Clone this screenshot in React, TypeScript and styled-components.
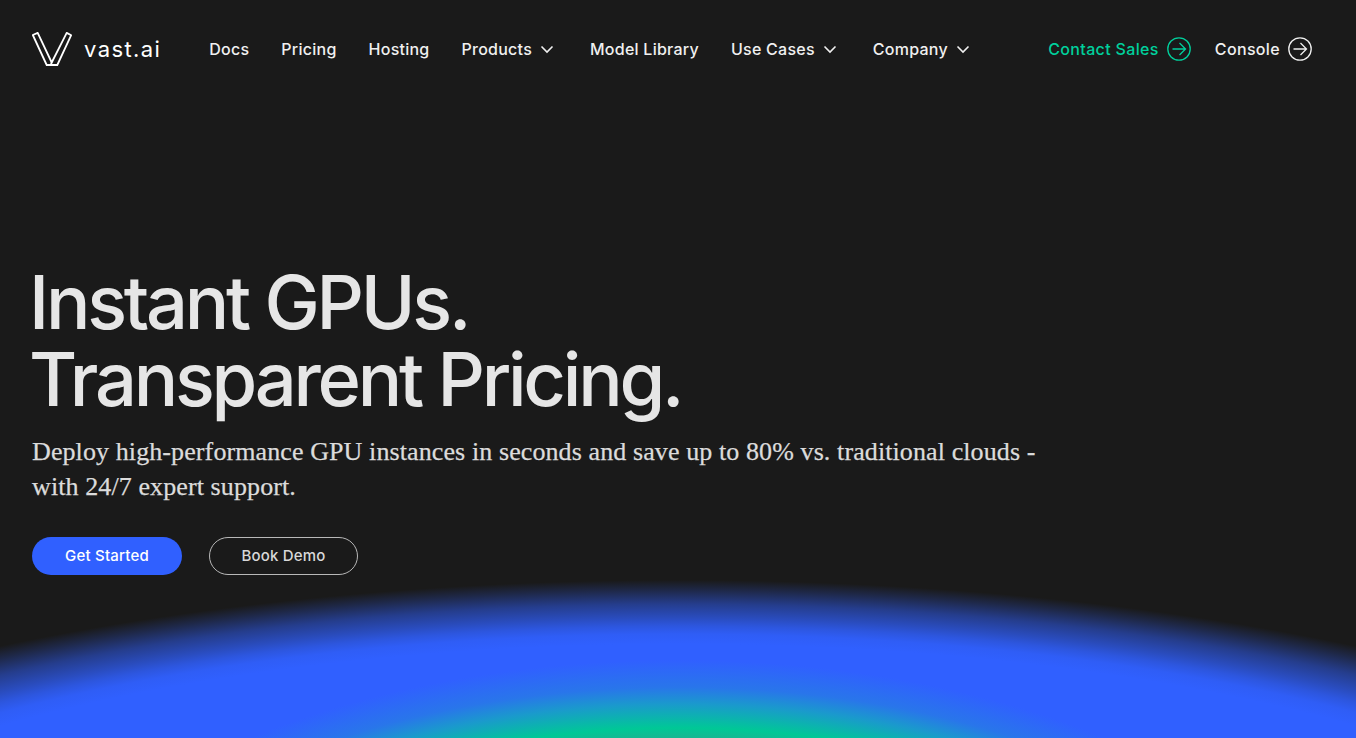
import styled, { createGlobalStyle } from 'styled-components';

const GlobalStyle = createGlobalStyle`
  html, body {
    margin: 0;
    padding: 0;
    background: #1a1a1a;
  }
`;

const Page = styled.div`
  position: relative;
  width: 100%;
  height: 738px;
  overflow: hidden;
  background: #1a1a1a;
  font-family: 'Inter', 'Liberation Sans', sans-serif;
`;

const Header = styled.header`
  position: relative;
  z-index: 1;
  display: flex;
  align-items: center;
  height: 98px;
  padding: 0 44px 0 32px;
`;

const LogoLink = styled.a`
  display: flex;
  align-items: center;
  gap: 12px;
  margin-right: 48px;
  color: #fff;
`;

const LogoText = styled.span`
  font-family: 'Inter', sans-serif;
  font-size: 22px;
  font-weight: 400;
  letter-spacing: 1.4px;
`;

const Nav = styled.nav`
  display: flex;
  align-items: center;
  gap: 32px;
`;

const NavItem = styled.a`
  display: flex;
  align-items: center;
  gap: 7px;
  color: #f0f0f0;
  font-size: 16px;
  font-weight: 500;
  letter-spacing: 0.25px;
`;

const ChevronIcon = styled.svg`
  margin-right: 3px;
`;

const Actions = styled.div`
  display: flex;
  align-items: center;
  gap: 24px;
  margin-left: auto;
`;

const ActionLink = styled.a<{ $accent?: boolean }>`
  display: flex;
  align-items: center;
  gap: 8px;
  color: ${(p) => (p.$accent ? '#00d09c' : '#f0f0f0')};
  font-size: 16px;
  font-weight: 500;
  letter-spacing: 0.35px;
`;

const Hero = styled.section`
  position: relative;
  z-index: 1;
  padding: 166px 0 0 32px;
`;

const Heading = styled.h1`
  margin: 0 0 0 -3px;
  color: #e6e6e6;
  font-size: 74px;
  font-weight: 500;
  line-height: 77px;
  letter-spacing: -3.25px;
`;

const Sub = styled.p`
  margin: 16px 0 0;
  width: 1010px;
  color: #dcdcdc;
  font-family: 'Liberation Serif', serif;
  font-size: 26px;
  line-height: 35px;
  letter-spacing: 0.1px;
  -webkit-text-stroke: 0.25px #dcdcdc;
`;

const Buttons = styled.div`
  display: flex;
  gap: 27px;
  margin-top: 33px;
`;

const Button = styled.a<{ $primary?: boolean }>`
  display: flex;
  align-items: center;
  justify-content: center;
  box-sizing: border-box;
  width: ${(p) => (p.$primary ? '150px' : '149px')};
  height: 38px;
  padding-bottom: 2px;
  border-radius: 19px;
  font-size: 15px;
  font-weight: 500;
  letter-spacing: 0.2px;
  color: ${(p) => (p.$primary ? '#fff' : '#d8d8d8')};
  background: ${(p) => (p.$primary ? '#3060ff' : 'transparent')};
  border: ${(p) => (p.$primary ? 'none' : '1px solid #b8b8b8')};
`;

// big soft blue dome rising from the bottom of the page
const Glow = styled.div`
  position: absolute;
  left: 50%;
  top: 580px;
  width: 2464px;
  height: 800px;
  transform: translateX(-50%);
  background: radial-gradient(
    ellipse 50% 50% at 50% 50%,
    #3060ff 0%,
    #3060ff 84%,
    rgba(48, 96, 255, 0.96) 86.5%,
    rgba(48, 96, 255, 0.86) 88.5%,
    rgba(48, 96, 255, 0.72) 90.5%,
    rgba(48, 96, 255, 0.5) 94%,
    rgba(48, 96, 255, 0.2) 97.5%,
    rgba(48, 96, 255, 0) 100%
  );
`;

// green core sitting inside the dome
const GlowCore = styled.div`
  position: absolute;
  left: 50%;
  top: 660px;
  width: 1344px;
  height: 680px;
  transform: translateX(-50%);
  background: radial-gradient(
    ellipse 50% 50% at 50% 50%,
    #20b090 0%,
    #20b090 76%,
    #00c896 80%,
    #1a9acc 87%,
    rgba(40, 120, 232, 0.9) 92%,
    rgba(44, 110, 240, 0) 100%
  );
`;

function Chevron() {
  return (
    <ChevronIcon width="16" height="16" viewBox="0 0 16 16" fill="none" stroke="currentColor" strokeWidth="1.6">
      <path d="M2.5 5.5 8 11 13.5 5.5" />
    </ChevronIcon>
  );
}

function ArrowCircle() {
  return (
    <svg width="24" height="24" viewBox="0 0 24 24" fill="none" stroke="currentColor" strokeWidth="1.3">
      <circle cx="12" cy="12" r="11.2" />
      <path d="M5.5 12H18M12.5 6 18.5 12 12.5 18" />
    </svg>
  );
}

function Logo() {
  return (
    <svg width="40" height="34" viewBox="0 0 40 34" fill="none" stroke="#fff" strokeWidth="1.8" strokeLinejoin="round">
      <path d="M.8 3 5.7 .9 19.7 30.5 34.7 .9 39.2 3.2 25.3 33H14.7Z" />
      <path d="M19.7 30.5 18.6 33" />
    </svg>
  );
}

const navItems = [
  { label: 'Docs' },
  { label: 'Pricing' },
  { label: 'Hosting' },
  { label: 'Products', menu: true },
  { label: 'Model Library' },
  { label: 'Use Cases', menu: true },
  { label: 'Company', menu: true },
];

export default function App(): JSX.Element {
  return (
    <Page>
      <GlobalStyle />
      <Glow />
      <GlowCore />
      <Header>
        <LogoLink>
          <Logo />
          <LogoText>vast.ai</LogoText>
        </LogoLink>
        <Nav>
          {navItems.map((item) => (
            <NavItem key={item.label}>
              {item.label}
              {item.menu && <Chevron />}
            </NavItem>
          ))}
        </Nav>
        <Actions>
          <ActionLink $accent>
            Contact Sales
            <ArrowCircle />
          </ActionLink>
          <ActionLink>
            Console
            <ArrowCircle />
          </ActionLink>
        </Actions>
      </Header>
      <Hero>
        <Heading>
          Instant GPUs.
          <br />
          Transparent Pricing.
        </Heading>
        <Sub>
          Deploy high-performance GPU instances in seconds and save up to 80% vs. traditional clouds - with 24/7 expert support.
        </Sub>
        <Buttons>
          <Button $primary>Get Started</Button>
          <Button>Book Demo</Button>
        </Buttons>
      </Hero>
    </Page>
  );
}
